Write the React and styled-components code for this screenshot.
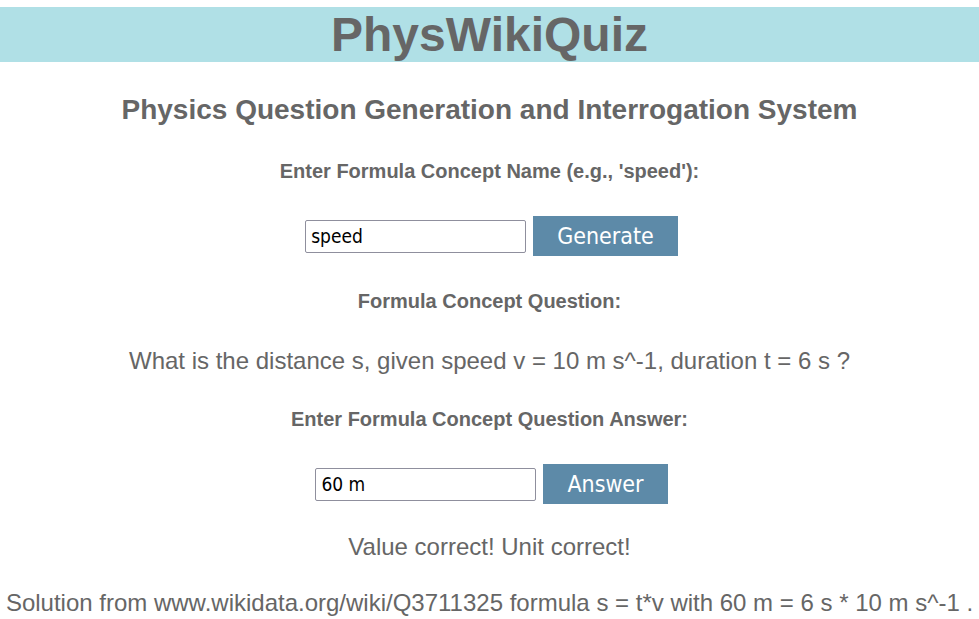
import React, { useState } from "react";
import styled, { createGlobalStyle } from "styled-components";

const GlobalStyle = createGlobalStyle`
  html, body {
    margin: 0;
    padding: 0;
    background: #fff;
  }
  body {
    font-family: "Liberation Sans", Arial, sans-serif;
    color: #666;
  }
`;

const Page = styled.div`
  display: flex;
  flex-direction: column;
  align-items: center;
  padding-top: 7px;
`;

const Banner = styled.header`
  align-self: stretch;
  height: 55px;
  background: #b0e0e6;
  display: flex;
  justify-content: center;
  align-items: center;
`;

const Title = styled.h1`
  margin: 0;
  font-size: 48px;
  font-weight: bold;
  line-height: 55px;
  color: #666;
`;

const Subtitle = styled.h2`
  margin: 33px 0 0;
  font-size: 28px;
  line-height: 30px;
  font-weight: bold;
  white-space: nowrap;
`;

const Label = styled.div`
  margin-top: ${(p) => p.gap || 34}px;
  font-size: 20px;
  line-height: 22px;
  font-weight: bold;
  white-space: nowrap;
`;

const Row = styled.div`
  margin-top: 34px;
  display: flex;
  align-items: center;
  gap: 7px;
  transform: translateX(${(p) => p.shift || 0}px);
`;

const Input = styled.input`
  box-sizing: border-box;
  width: 221px;
  height: 33px;
  padding: 0 5px;
  border: 1px solid #8f8f9d;
  border-radius: 2px;
  font-family: "DejaVu Sans Condensed", "DejaVu Sans", sans-serif;
  font-size: 19px;
  color: #000;
  outline: none;
`;

const Button = styled.button`
  height: 40px;
  padding: 0 24px;
  border: none;
  background: #5d8aa8;
  color: #fff;
  font-family: "DejaVu Sans Condensed", "DejaVu Sans", sans-serif;
  font-size: 23px;
  cursor: pointer;
`;

const Text = styled.p`
  margin: ${(p) => p.gap || 30}px 0 0;
  font-size: 24px;
  line-height: 26px;
  white-space: nowrap;
`;

export default function App() {
  const [concept, setConcept] = useState("speed");
  const [answer, setAnswer] = useState("60 m");

  return (
    <>
      <GlobalStyle />
      <Page>
        <Banner>
          <Title>PhysWikiQuiz</Title>
        </Banner>
        <Subtitle>Physics Question Generation and Interrogation System</Subtitle>
        <Label gap={35}>Enter Formula Concept Name (e.g., 'speed'):</Label>
        <Row shift={2}>
          <Input value={concept} onChange={(e) => setConcept(e.target.value)} />
          <Button>Generate</Button>
        </Row>
        <Label>Formula Concept Question:</Label>
        <Text gap={36}>What is the distance s, given speed v = 10 m s^-1, duration t = 6 s ?</Text>
        <Label>Enter Formula Concept Question Answer:</Label>
        <Row shift={2}>
          <Input value={answer} onChange={(e) => setAnswer(e.target.value)} />
          <Button>Answer</Button>
        </Row>
        <Text>Value correct! Unit correct!</Text>
        <Text>Solution from www.wikidata.org/wiki/Q3711325 formula s = t*v with 60 m = 6 s * 10 m s^-1 .</Text>
      </Page>
    </>
  );
}
